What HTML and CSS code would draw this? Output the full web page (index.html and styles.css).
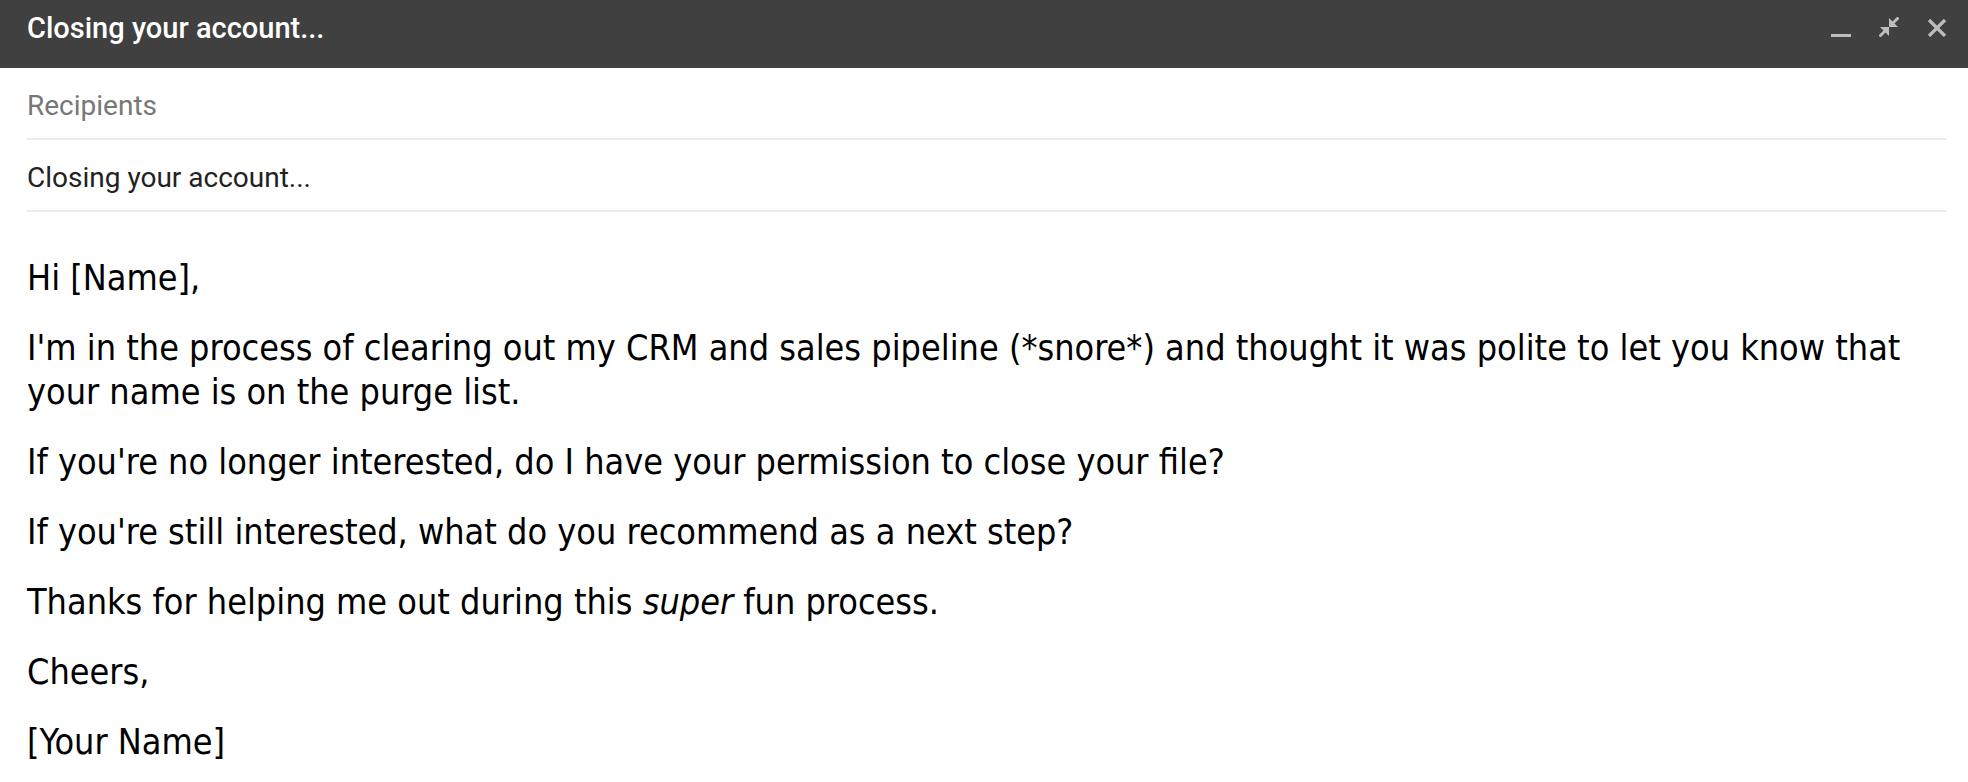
FILE: index.html
```html
<!DOCTYPE html>
<html lang="en">
<head>
<meta charset="utf-8">
<title>Closing your account...</title>
<link rel="stylesheet" href="styles.css">
</head>
<body>
<div class="compose">
  <header class="titlebar">
    <div class="title">Closing your account...</div>
    <div class="actions">
      <svg class="icon" viewBox="0 0 20 20" aria-label="Minimize"><rect x="0" y="17" width="20" height="4" fill="#bdbdbd"/></svg>
      <svg class="icon" viewBox="0 0 20 20" aria-label="Exit full screen">
        <polygon points="10,1 10,10 19,10" fill="#bdbdbd"/>
        <line x1="12.5" y1="7.5" x2="19.5" y2="0.5" stroke="#bdbdbd" stroke-width="2.8"/>
        <polygon points="10,10 1,10 10,19" fill="#bdbdbd"/>
        <line x1="7.5" y1="12.5" x2="0.5" y2="19.5" stroke="#bdbdbd" stroke-width="2.8"/>
      </svg>
      <svg class="icon close" viewBox="0 0 20 20" aria-label="Close">
        <path d="M2 3 L18 19 M18 3 L2 19" stroke="#bdbdbd" stroke-width="3.2" fill="none"/>
      </svg>
    </div>
  </header>
  <div class="field recipients">Recipients</div>
  <div class="field subject">Closing your account...</div>
  <div class="message">
    <p>Hi [Name],</p>
    <p>I'm in the process of clearing out my CRM and sales pipeline (*snore*) and thought it was polite to let you know that your name is on the purge list.</p>
    <p>If you're no longer interested, do I have your permission to close your file?</p>
    <p>If you're still interested, what do you recommend as a next step?</p>
    <p>Thanks for helping me out during this <em>super</em> fun process.</p>
    <p>Cheers,</p>
    <p>[Your Name]</p>
  </div>
</div>
</body>
</html>
```
FILE: styles.css
```css
html, body {
  margin: 0;
  padding: 0;
  background: #ffffff;
}

.compose {
  font-family: Roboto, "Liberation Sans", sans-serif;
}

.titlebar {
  box-sizing: border-box;
  height: 68px;
  background: #404040;
  display: flex;
  justify-content: space-between;
  align-items: flex-start;
  padding: 11px 21px 0 27px;
}

.title {
  color: #ffffff;
  font-size: 29px;
  font-weight: 500;
  line-height: 34px;
}

.actions {
  display: flex;
  gap: 28px;
  padding-top: 6px;
}

.icon {
  width: 20px;
  height: 20px;
  display: block;
}

.field {
  margin: 0 22px 0 27px;
  padding: 21px 0 15px;
  font-size: 28px;
  line-height: 34px;
  border-bottom: 2px solid #e9ecef;
}

.recipients {
  color: #777777;
}

.subject {
  color: #222222;
}

.message {
  padding: 44px 22px 0 27px;
  font-family: "DejaVu Sans Condensed", "DejaVu Sans", sans-serif;
  font-stretch: condensed;
  font-size: 35.7px;
  line-height: 44px;
  color: #000000;
}

.message p {
  margin: 0 0 26px;
}

.message em {
  font-style: italic;
}
```
